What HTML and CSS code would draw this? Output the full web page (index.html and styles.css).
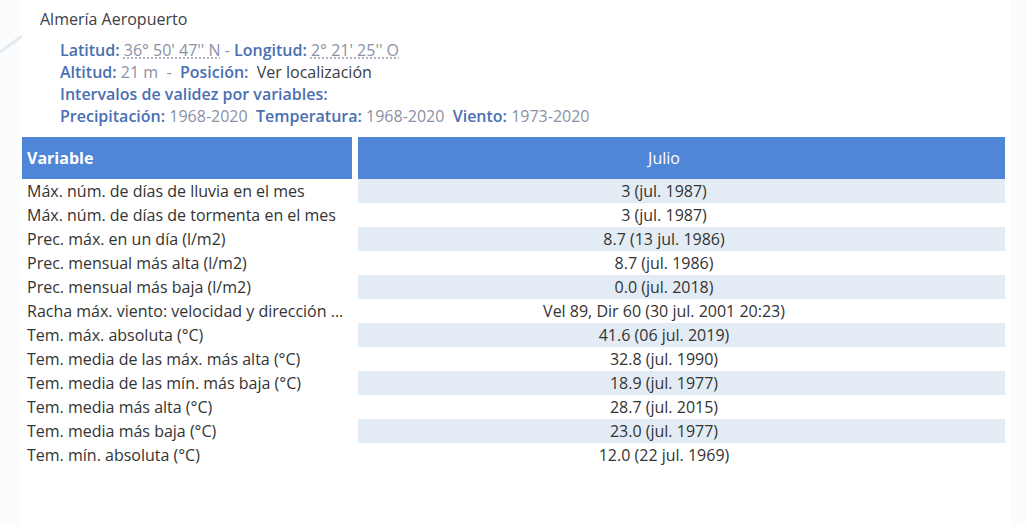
FILE: index.html
```html
<!DOCTYPE html>
<html lang="es">
<head>
<meta charset="utf-8">
<title>Almería Aeropuerto</title>
<link rel="stylesheet" href="styles.css">
</head>
<body>
<div class="page">
  <svg class="deco" width="30" height="60" viewBox="0 0 30 60"><line x1="0" y1="52" x2="22" y2="36" stroke="#e6e9ef" stroke-width="3"/></svg>
  <div class="content">
    <h1 class="title">Almería Aeropuerto</h1>
    <div class="info">
      <div class="line"><span class="lbl">Latitud:</span> <abbr class="val dotted">36° 50' 47'' N</abbr> <span class="val">-</span> <span class="lbl">Longitud:</span> <abbr class="val dotted">2° 21' 25'' O</abbr></div>
      <div class="line"><span class="lbl">Altitud:</span> <span class="val">21 m&nbsp; -&nbsp;</span> <span class="lbl">Posición:</span>&nbsp; <span class="link">Ver localización</span></div>
      <div class="line"><span class="lbl">Intervalos de validez por variables:</span></div>
      <div class="line"><span class="lbl">Precipitación:</span> <span class="val">1968-2020</span>&nbsp; <span class="lbl">Temperatura:</span> <span class="val">1968-2020</span>&nbsp; <span class="lbl">Viento:</span> <span class="val">1973-2020</span></div>
    </div>
    <div class="table">
      <div class="row head"><div class="c1">Variable</div><div class="c2">Julio</div></div>
      <div class="row odd"><div class="c1">Máx. núm. de días de lluvia en el mes</div><div class="c2">3 (jul. 1987)</div></div>
      <div class="row"><div class="c1">Máx. núm. de días de tormenta en el mes</div><div class="c2">3 (jul. 1987)</div></div>
      <div class="row odd"><div class="c1">Prec. máx. en un día (l/m2)</div><div class="c2">8.7 (13 jul. 1986)</div></div>
      <div class="row"><div class="c1">Prec. mensual más alta (l/m2)</div><div class="c2">8.7 (jul. 1986)</div></div>
      <div class="row odd"><div class="c1">Prec. mensual más baja (l/m2)</div><div class="c2">0.0 (jul. 2018)</div></div>
      <div class="row"><div class="c1">Racha máx. viento: velocidad y dirección ...</div><div class="c2">Vel 89, Dir 60 (30 jul. 2001 20:23)</div></div>
      <div class="row odd"><div class="c1">Tem. máx. absoluta (°C)</div><div class="c2">41.6 (06 jul. 2019)</div></div>
      <div class="row"><div class="c1">Tem. media de las máx. más alta (°C)</div><div class="c2">32.8 (jul. 1990)</div></div>
      <div class="row odd"><div class="c1">Tem. media de las mín. más baja (°C)</div><div class="c2">18.9 (jul. 1977)</div></div>
      <div class="row"><div class="c1">Tem. media más alta (°C)</div><div class="c2">28.7 (jul. 2015)</div></div>
      <div class="row odd"><div class="c1">Tem. media más baja (°C)</div><div class="c2">23.0 (jul. 1977)</div></div>
      <div class="row"><div class="c1">Tem. mín. absoluta (°C)</div><div class="c2">12.0 (22 jul. 1969)</div></div>
    </div>
  </div>
</div>
</body>
</html>
```
FILE: styles.css
```css
html, body {
  margin: 0;
  padding: 0;
  background: #fbfcfd;
}
body {
  font-family: "Open Sans", "Liberation Sans", sans-serif;
  font-size: 16px;
  color: #333;
}
.page {
  position: relative;
  width: 1026px;
  height: 526px;
  overflow: hidden;
}
.deco {
  position: absolute;
  left: 0;
  top: 0;
}
.content {
  margin-left: 20px;
  width: 990px;
  height: 526px;
  background: #fff;
  padding-top: 8px;
  box-sizing: border-box;
}
.title {
  margin: 0 0 9px 20px;
  font-size: 16px;
  font-weight: 400;
  line-height: 22px;
  color: #3d4149;
}
.info {
  margin-left: 40px;
  line-height: 22px;
}
.lbl {
  color: #4a6fb3;
  font-weight: 600;
}
.val {
  color: #8a91a6;
}
.dotted {
  text-decoration: underline dotted #9aa1b3;
  text-underline-offset: 2px;
}
.link {
  color: #3a3d44;
}
.table {
  margin: 10px 0 0 2px;
  width: 983px;
}
.row {
  display: grid;
  grid-template-columns: 330px 647px;
  column-gap: 6px;
  line-height: 24px;
  height: 24px;
}
.c1 {
  padding-left: 5px;
  white-space: nowrap;
}
.c2 {
  text-align: center;
  padding: 0 40px 0 5px;
}
.row.odd .c2 {
  background: #e3ecf5;
}
.row.head {
  height: 42px;
  line-height: 42px;
  color: #fff;
}
.row.head .c1,
.row.head .c2 {
  background: #4f86d8;
}
.row.head .c1 {
  font-weight: 700;
}
```
